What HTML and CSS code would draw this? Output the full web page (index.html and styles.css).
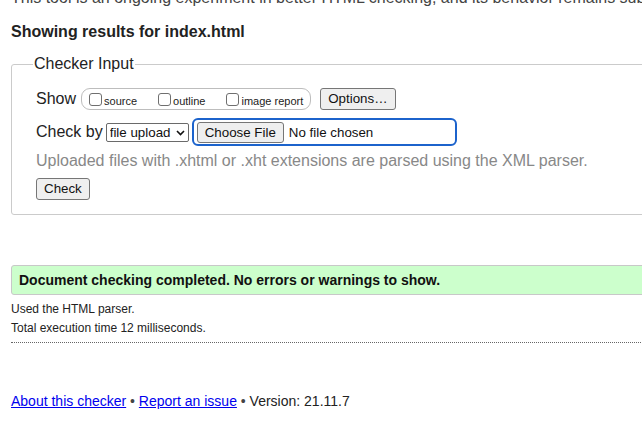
FILE: index.html
```html
<!DOCTYPE html>
<html lang="en">
<head>
<meta charset="utf-8">
<title>Showing results for index.html - Nu Html Checker</title>
<link rel="stylesheet" href="styles.css">
</head>
<body>
<div class="page">
  <p class="intro">This tool is an ongoing experiment in better HTML checking, and its behavior remains subject to change</p>
  <h2 class="title">Showing results for index.html</h2>

  <form class="checker">
    <fieldset class="panel">
      <legend class="panel-legend">Checker Input</legend>
      <div class="row row-show">
        <span class="row-label">Show</span>
        <span class="opts">
          <label class="opt"><input type="checkbox" class="cb"><span>source</span></label>
          <label class="opt"><input type="checkbox" class="cb"><span>outline</span></label>
          <label class="opt"><input type="checkbox" class="cb"><span>image report</span></label>
        </span>
        <button type="button" class="btn btn-options">Options…</button>
      </div>
      <div class="row row-check">
        <span class="row-label">Check by</span>
        <span class="select-wrap">
          <select class="select"><option>file upload</option></select>
          <svg class="chev" width="9" height="6" viewBox="0 0 9 6"><path d="M1 1 L4.5 4.5 L8 1" fill="none" stroke="#111" stroke-width="1.6"/></svg>
        </span>
        <span class="file">
          <button type="button" class="btn btn-file">Choose File</button>
          <span class="file-name">No file chosen</span>
        </span>
      </div>
      <p class="hint">Uploaded files with .xhtml or .xht extensions are parsed using the XML parser.</p>
      <button type="button" class="btn btn-check">Check</button>
    </fieldset>
  </form>

  <p class="success">Document checking completed. No errors or warnings to show.</p>

  <div class="meta">
    <p>Used the HTML parser.</p>
    <p>Total execution time 12 milliseconds.</p>
  </div>

  <p class="footer"><a href="#">About this checker</a> <span class="dot">•</span> <a href="#">Report an issue</a> <span class="dot">•</span> Version: 21.11.7</p>
</div>
</body>
</html>
```

FILE: styles.css
```css
html, body {
  margin: 0;
  padding: 0;
  overflow: hidden;
  background: #fff;
}

body {
  font-family: "Liberation Sans", Arial, sans-serif;
  color: #222;
  font-size: 16px;
}

.page {
  width: 720px;
  padding-left: 11px;
}

.intro {
  margin: -11px 0 0;
  color: #444;
  white-space: nowrap;
  line-height: 18.4px;
}

.title {
  margin: 16px 0 0;
  font-size: 16px;
  font-weight: bold;
  line-height: 18.4px;
  color: #222;
}

.checker {
  margin: 13px 0 0;
}

.panel {
  margin: 0;
  padding: 14px 24px 14px 24px;
  border: 1px solid #cbcbcb;
  border-radius: 3px;
}

.panel-legend {
  margin-left: -3px;
  padding: 0 1px;
  line-height: 18.4px;
  color: #222;
}

.row {
  display: flex;
  align-items: center;
}

.row-show {
  height: 22px;
  margin-top: 1px;
}

.row-check {
  margin-top: 8px;
  height: 28px;
}

.row-label {
  color: #222;
  white-space: nowrap;
}

.row-show .row-label {
  margin-right: 5px;
}

.row-check .row-label {
  margin-right: 3px;
}

.opts {
  display: flex;
  align-items: center;
  gap: 20px;
  height: 20px;
  padding: 0 7px 0 7px;
  border: 1px solid #bdbdbd;
  border-radius: 9px;
}

.opt {
  display: flex;
  align-items: center;
  gap: 2px;
  font-size: 11px;
  color: #222;
  white-space: nowrap;
}

.opt:nth-child(2) {
  margin-left: 1px;
}

.opt:nth-child(3) {
  margin-left: 1px;
}

.cb {
  appearance: none;
  -webkit-appearance: none;
  width: 13px;
  height: 13px;
  margin: 0;
  border: 1px solid #6f6f6f;
  border-radius: 3px;
  background: #fff;
}

.opt span {
  position: relative;
  top: 2px;
}

.btn {
  font-family: "Liberation Sans", Arial, sans-serif;
  font-size: 13.33px;
  color: #111;
  background: #efefef;
  border: 1px solid #767676;
  border-radius: 3px;
  padding: 0 7px;
  margin: 0;
  height: 22px;
  line-height: 20px;
  white-space: nowrap;
}

.btn-options {
  margin-left: 9px;
}

.select-wrap {
  position: relative;
  display: inline-flex;
}

.select {
  appearance: none;
  -webkit-appearance: none;
  width: 83px;
  height: 19px;
  margin: 0;
  padding: 0 0 0 3px;
  border: 1px solid #6a6a6a;
  border-radius: 2px;
  background: #fff;
  font-family: "Liberation Sans", Arial, sans-serif;
  font-size: 13.33px;
  color: #111;
}

.chev {
  position: absolute;
  right: 4px;
  top: 7px;
}

.file {
  display: flex;
  align-items: center;
  margin-left: 3px;
  width: 255px;
  height: 24px;
  padding: 0 3px;
  border: 2px solid #1c63cc;
  border-radius: 6px;
}

.btn-file {
  height: 21px;
  line-height: 19px;
}

.file-name {
  margin-left: 5px;
  font-size: 13.33px;
  color: #111;
  white-space: nowrap;
}

.hint {
  margin: 6px 0 0;
  color: #888;
  line-height: 18.4px;
}

.btn-check {
  display: block;
  margin-top: 7px;
}

.success {
  margin: 50px 0 0;
  padding: 6px 7px;
  border: 1px solid #c8c8c8;
  border-radius: 3px;
  background: #ccffcc;
  font-size: 14px;
  font-weight: bold;
  line-height: 16px;
  color: #111;
}

.meta {
  margin-top: 5px;
  padding-bottom: 3px;
  border-bottom: 1px dotted #666;
  width: 630px;
}

.meta p {
  margin: 0;
  font-size: 12px;
  line-height: 19.5px;
  color: #222;
}

.footer {
  margin: 50px 0 0;
  font-size: 14px;
  line-height: 16px;
  color: #222;
}

.footer a {
  color: #0000ee;
  text-decoration: underline;
}

.dot {
  color: #444;
}
```
